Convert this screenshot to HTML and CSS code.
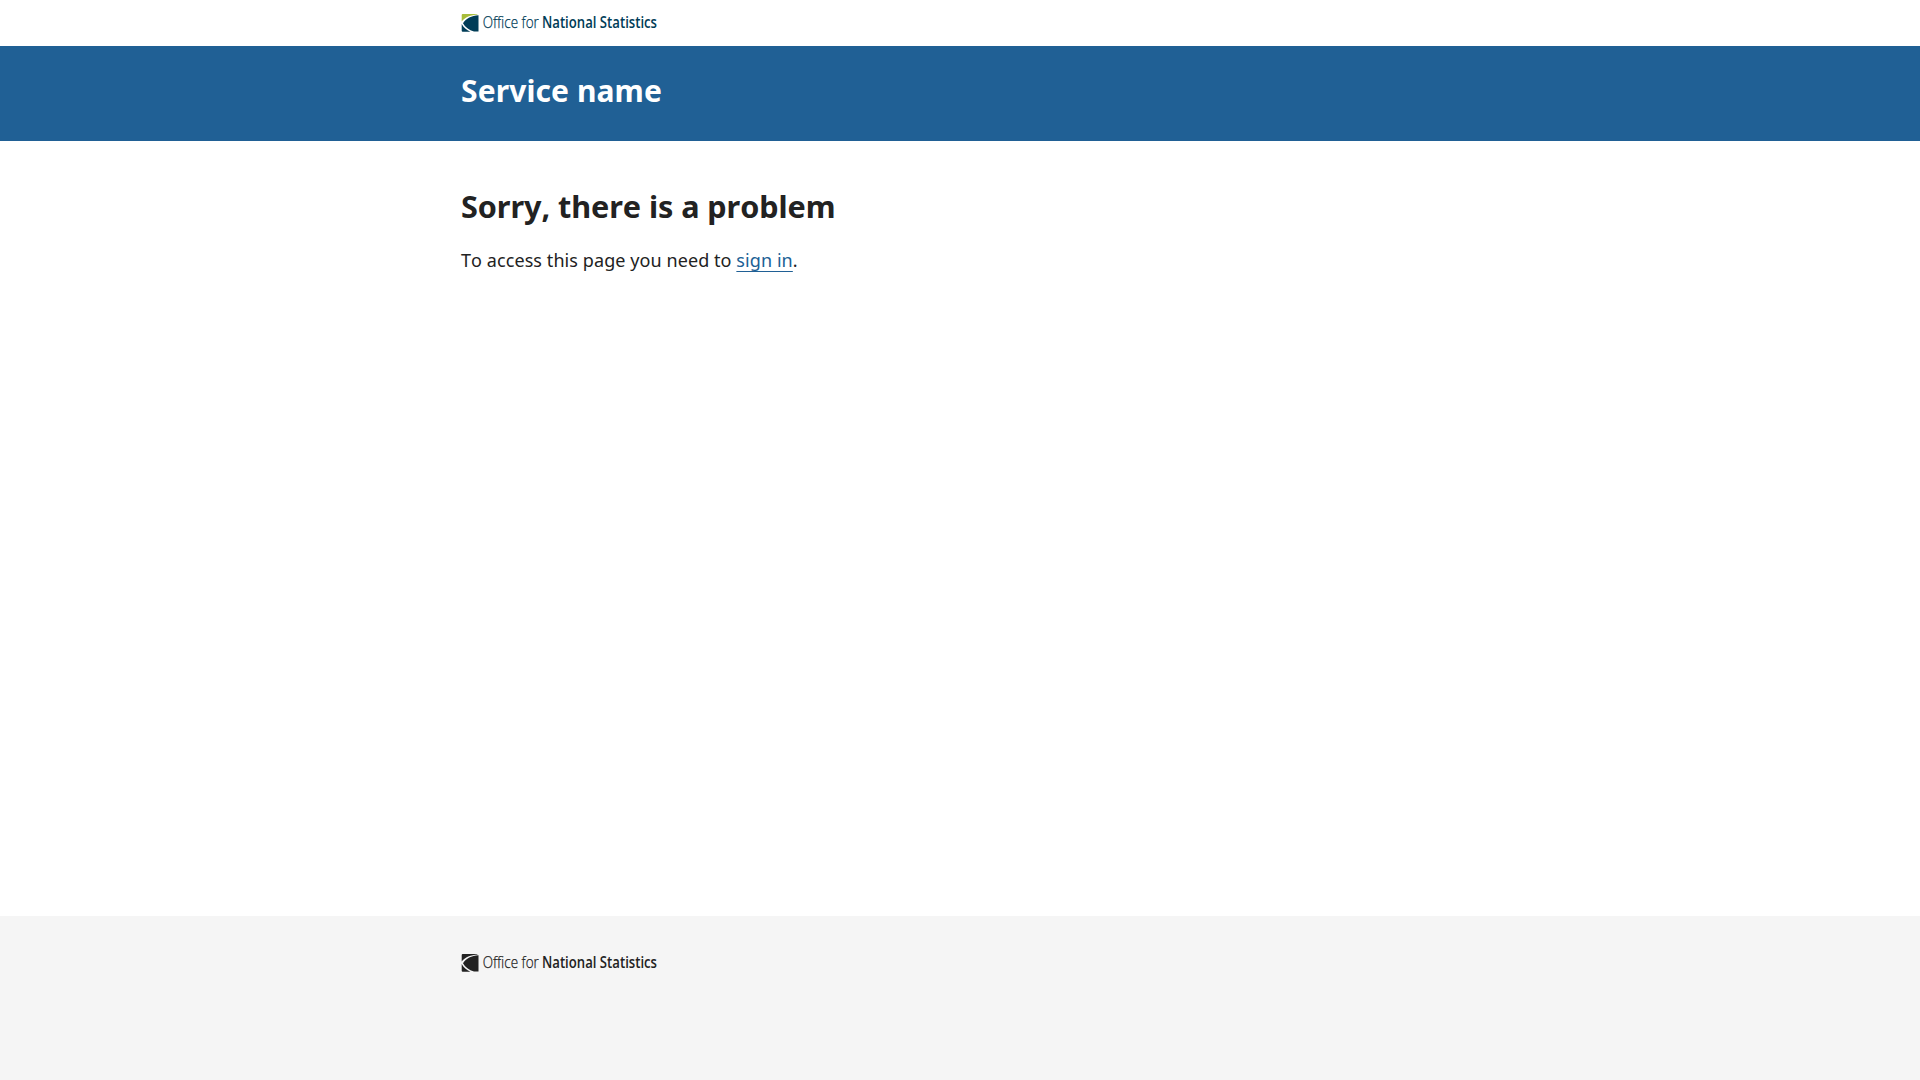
FILE: index.html
```html
<!DOCTYPE html>
<html lang="en">
<head>
<meta charset="utf-8">
<title>Sorry, there is a problem</title>
<link rel="stylesheet" href="styles.css">
</head>
<body>
<header>
<div class="masthead"><div class="container">
<svg class="logo" viewBox="0 0 197 19" role="img" aria-label="Office for National Statistics">
<path class="leaf" d="M.7 1Q.7 0 1.7 0H15.5Q16.6 0 16.9.5C9.5 .8 4 3.4 .7 7.6Z"/>
<path class="mark" d="M17.5 1.3V17.6H13C8 16.2 4 13 2 9.2C5 4.6 10.5 1.6 17.5 1.3ZM.7 10C2.6 13.5 5.5 16.2 9.4 17.7H1.7Q.7 17.7 .7 16.7Z"/>
<text class="light" x="21.8" y="14.4" textLength="56" lengthAdjust="spacingAndGlyphs">Office for</text>
<text class="strong" x="81" y="14.4" textLength="115" lengthAdjust="spacingAndGlyphs">National Statistics</text>
</svg>
</div></div>
<div class="banner"><div class="container"><div class="service">Service name</div></div></div>
</header>
<main class="container"><h1>Sorry, there is a problem</h1><p>To access this page you need to <a href="#">sign in</a>.</p></main>
<footer><div class="container">
<svg class="logo mono" viewBox="0 0 197 19" role="img" aria-label="Office for National Statistics">
<path class="leaf" d="M.7 1Q.7 0 1.7 0H15.5Q16.6 0 16.9.5C9.5 .8 4 3.4 .7 7.6Z"/>
<path class="mark" d="M17.5 1.3V17.6H13C8 16.2 4 13 2 9.2C5 4.6 10.5 1.6 17.5 1.3ZM.7 10C2.6 13.5 5.5 16.2 9.4 17.7H1.7Q.7 17.7 .7 16.7Z"/>
<text class="light" x="21.8" y="14.4" textLength="56" lengthAdjust="spacingAndGlyphs">Office for</text>
<text class="strong" x="81" y="14.4" textLength="115" lengthAdjust="spacingAndGlyphs">National Statistics</text>
</svg>
</div></footer>
</body>
</html>
```
FILE: styles.css
```css
* { box-sizing: border-box; }
body { margin: 0; min-height: 100vh; display: flex; flex-direction: column; font: 18px/1.6 "Noto Sans", sans-serif; font-kerning: none; color: #222; background: #fff; }
.container { width: 998px; margin: 0 auto; }
.masthead { height: 46px; padding-top: 14px; }
.logo { display: block; width: 197px; height: 19px; overflow: visible; }
.logo text { font-family: "Open Sans", sans-serif; font-size: 15.8px; fill: #003c57; }
.logo .light { font-weight: 300; stroke: #003c57; stroke-width: 0.25px; }
.logo.mono .light { stroke: #222; }
.logo .strong { font-weight: 600; }
.leaf { fill: #a8bd3a; }
.mark { fill: #003c57; }
.mono text, .mono path { fill: #222; }
.banner { height: 95px; padding-top: 24px; background: #206095; }
.service { font-size: 30px; line-height: 42px; font-weight: 700; letter-spacing: 0.1px; color: #fff; }
main { flex: 1; padding-top: 44px; }
h1 { margin: 0 0 19px; font-size: 30.6px; line-height: 42px; letter-spacing: -0.07px; }
p { margin: 0; letter-spacing: 0.08px; }
a { color: #206095; text-decoration: underline; text-underline-position: under; }
footer { height: 164px; padding-top: 38px; background: #f5f5f5; }
```
